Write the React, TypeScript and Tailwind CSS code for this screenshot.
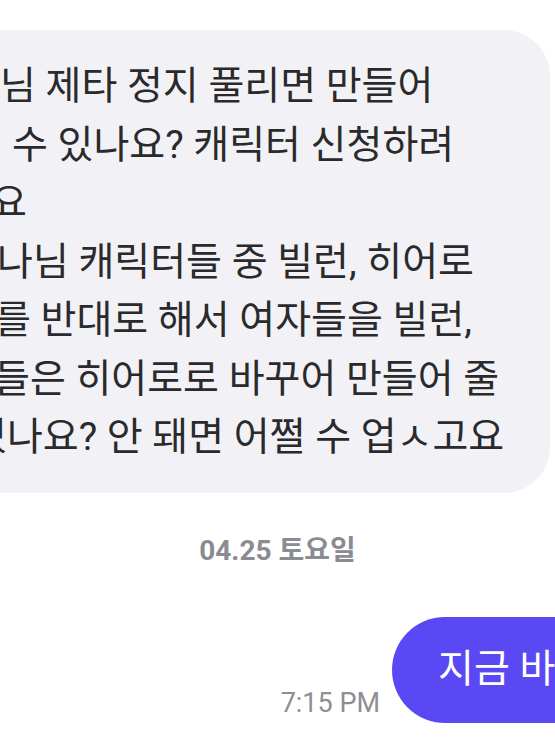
import React from "react";

const lines: { text: string; offset: string }[] = [
  { text: "님 제타 정지 풀리면 만들어", offset: "ml-[0px]" },
  { text: "수 있나요? 캐릭터 신청하려", offset: "ml-[12px]" },
  { text: "요", offset: "ml-[-9px]" },
  { text: "나님 캐릭터들 중 빌런, 히어로", offset: "ml-[-3px]" },
  { text: "를 반대로 해서 여자들을 빌런,", offset: "ml-[-5px]" },
  { text: "들은 히어로로 바꾸어 만들어 줄", offset: "ml-[-6px]" },
  { text: "있나요? 안 돼면 어쩔 수 업ㅅ고요", offset: "ml-[-29px]" },
];

export default function App() {
  return (
    <div
      className="w-[555px] h-[740px] overflow-hidden bg-white flex flex-col"
      style={{ fontFamily: 'Roboto, "Noto Sans CJK KR", sans-serif' }}
    >
      <div className="mt-[30px] flex justify-end pr-[5px]">
        <div className="w-[650px] shrink-0 bg-[#f2f2f6] rounded-[46px] pt-[27px] pb-[26px] pl-[100px]">
          {lines.map((l, i) => (
            <div
              key={i}
              className={`${l.offset} whitespace-nowrap text-[39px] leading-[58.5px] text-[#2a2a2c]`}
            >
              {l.text}
            </div>
          ))}
        </div>
      </div>

      <div className="mt-[41px] text-center text-[28px] font-bold leading-[34px] text-[#8b8b93]">
        04.25 토요일
      </div>

      <div className="mt-[49px] flex items-end justify-end">
        <div className="mb-[3px] mr-[12px] text-[27px] leading-[34px] text-[#8e8e93]">
          7:15 PM
        </div>
        <div className="w-[200px] shrink-0 mr-[-37px] h-[106px] rounded-l-[53px] bg-[#5a48f5] pl-[46px] flex items-center text-[39px] text-white whitespace-nowrap overflow-hidden">
          지금 바로
        </div>
      </div>
    </div>
  );
}
